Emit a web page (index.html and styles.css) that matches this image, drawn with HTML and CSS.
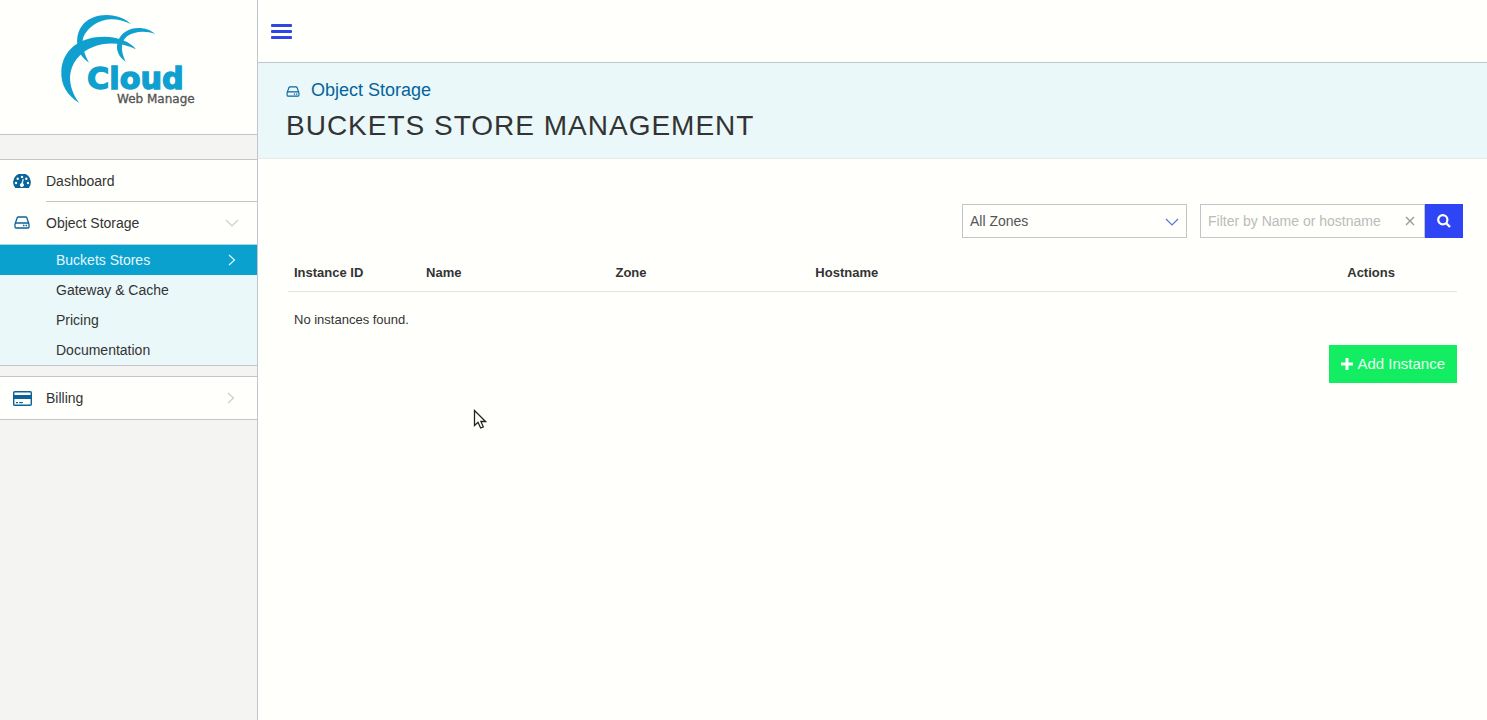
FILE: index.html
```html
<!DOCTYPE html>
<html lang="en">
<head>
<meta charset="utf-8">
<meta name="viewport" content="width=device-width, initial-scale=1">
<title>Buckets Store Management</title>
<link rel="stylesheet" href="styles.css">
</head>
<body>
<svg class="defs" aria-hidden="true">
  <symbol id="drive" viewBox="0 0 16 13">
    <path d="M1.2 7.500 3.200 1.800Q3.500 1 4.400 1H11.600Q12.500 1 12.800 1.800L14.800 7.500M2 7H14Q15 7 15 8V11Q15 12 14 12H2Q1 12 1 11V8Q1 7 2 7Z" fill="none" stroke="currentColor" stroke-width="1.300"/>
    <path d="M9 8.800h1.500v1.500H9zM11.600 8.800h1.500v1.500h-1.500z" fill="currentColor"/>
  </symbol>
  <symbol id="down" viewBox="0 0 14 8"><path d="M1 1 7 7 13 1" fill="none" stroke="currentColor" stroke-width="1.2"/></symbol>
  <symbol id="right" viewBox="0 0 8 12"><path d="M1 1 6.500 6 1 11" fill="none" stroke="currentColor" stroke-width="1.2"/></symbol>
</svg>
<div class="layout">
  <aside class="sidebar">
    <a class="brand" href="#" aria-label="Cloud Web Manage">
      <svg class="logo" viewBox="0 0 480 360">
        <g fill="#0fa0cf">
          <path d="M82 134C77 82 112 45 170 45C200 45 226 56 242 72C205 53 165 53 135 72C112 87 98 107 98 124Z"/>
          <path d="M88 309C50 286 32 253 34 214C37 150 88 110 163 110C207 111 242 126 258 148C218 128 171 125 131 140C88 156 62 191 60 231C60 263 72 288 88 309Z"/>
          <path d="M92 150 102 154Q108 174 117 188Q98 176 88 156Z"/>
          <path d="M227 185C203 169 196 145 204 124C214 96 240 82 272 84C291 86 306 93 316 102C285 90 252 94 232 108C214 122 209 147 227 185Z"/>
        </g>
        <text class="logo-name" x="111" y="266">Cloud</text>
        <text class="logo-tag" x="201" y="309">Web Manage</text>
      </svg>
    </a>
    <nav class="menu">
      <a class="item first" href="#">
        <svg class="item-icon" viewBox="0 0 18 14"><path fill="#0a649b" d="M2.200 14A8.900 8.900 0 1 1 15.800 14Z"/><g fill="#fffffc"><circle cx="3" cy="9" r="1.200"/><circle cx="4.700" cy="4.700" r="1.200"/><circle cx="9" cy="2.900" r="1.200"/><circle cx="13.300" cy="4.700" r="1.200"/><circle cx="15" cy="9" r="1.200"/><path d="M9.800 4.800 10.800 5 9.900 9.200A2 2 0 1 1 8.500 9Z"/></g></svg>
        <span class="label">Dashboard</span>
      </a>
      <a class="item ruled" href="#" aria-expanded="true">
        <svg class="item-icon small"><use href="#drive"/></svg>
        <span class="label">Object Storage</span>
        <svg class="chev-down"><use href="#down"/></svg>
      </a>
      <div class="submenu">
        <a class="sub active" href="#">Buckets Stores<svg class="chev-right"><use href="#right"/></svg></a>
        <a class="sub" href="#">Gateway &amp; Cache</a>
        <a class="sub" href="#">Pricing</a>
        <a class="sub" href="#">Documentation</a>
      </div>
    </nav>
    <nav class="menu billing">
      <a class="item" href="#">
        <svg class="item-icon card" viewBox="0 0 19 15"><rect x=".7" y=".7" width="17.600" height="13.600" rx="1" fill="none" stroke="#0a649b" stroke-width="1.400"/><path fill="#0a649b" d="M1 4h17v4H1zM3 11h2v1.200H3zM6.200 11h3.600v1.200H6.200z"/></svg>
        <span class="label">Billing</span>
        <svg class="chev-right"><use href="#right"/></svg>
      </a>
    </nav>
  </aside>
  <main class="main">
    <header class="topbar">
      <button class="burger" type="button" aria-label="Toggle menu"><span></span><span></span><span></span></button>
    </header>
    <section class="heading">
      <p class="crumb"><svg class="crumb-icon"><use href="#drive"/></svg>Object Storage</p>
      <h1>BUCKETS STORE MANAGEMENT</h1>
    </section>
    <section class="content">
      <form class="filters">
        <div class="zone">
          <select aria-label="Zone"><option>All Zones</option></select>
          <svg class="zone-arrow"><use href="#down"/></svg>
        </div>
        <div class="search">
          <div class="field">
            <input type="text" aria-label="Filter" placeholder="Filter by Name or hostname">
            <button class="clear" type="button" aria-label="Clear"><svg viewBox="0 0 10 10"><path d="M1 1 9 9M9 1 1 9" stroke="#999" stroke-width="1.400"/></svg></button>
          </div>
          <button class="go" type="submit" aria-label="Search"><svg viewBox="0 0 14 14"><circle cx="5.800" cy="5.800" r="4.600" fill="none" stroke="#fff" stroke-width="2.200"/><path d="M9 9 13 13" stroke="#fff" stroke-width="2.400"/></svg></button>
        </div>
      </form>
      <div class="list">
        <table>
          <colgroup><col class="c-id"><col class="c-name"><col class="c-zone"><col class="c-host"><col></colgroup>
          <thead><tr><th>Instance ID</th><th>Name</th><th>Zone</th><th>Hostname</th><th>Actions</th></tr></thead>
          <tbody><tr><td colspan="5">No instances found.</td></tr></tbody>
        </table>
        <button class="add" type="button"><svg viewBox="0 0 12 12"><path d="M4.500 0h3v4.500H12v3H7.500V12h-3V7.500H0v-3h4.500z" fill="#fff"/></svg>Add Instance</button>
      </div>
    </section>
  </main>
</div>
<svg class="pointer" viewBox="0 0 14 21" aria-hidden="true"><path d="M1.500 1.500V16.500L5 13.300 7.600 19 10.300 17.800 7.900 12.500H12.500Z" fill="#fff" stroke="#222" stroke-width="1.300"/></svg>
</body>
</html>
```
FILE: styles.css
```css
* { box-sizing: border-box; }
body {
  margin: 0;
  background: #fffffc;
  color: #333;
  font: 14px/20px "Liberation Sans", Arial, sans-serif;
}
a { color: inherit; text-decoration: none; }
button { border: 0; padding: 0; font: inherit; cursor: pointer; }
svg { display: block; flex: none; }
.defs { position: absolute; width: 0; height: 0; }
.layout { display: flex; min-height: 100vh; }

.sidebar { flex: none; width: 258px; background: #f4f5f3; border-right: 1px solid #c4c4cc; }
.brand { display: block; height: 135px; padding-left: 50px; background: #fffffc; border-bottom: 1px solid #c4c4cc; }
.logo { width: 160px; height: 120px; }
.logo-name { font: bold 91px "DejaVu Sans", sans-serif; fill: #0fa0cf; stroke: #0fa0cf; stroke-width: 4px; }
.logo-tag { font: 36px "DejaVu Sans", sans-serif; fill: #555; stroke: #555; stroke-width: 1px; }
.menu { margin-top: 24px; background: #fffffc; border: solid #c4c4cc; border-width: 1px 0; }
.billing { margin-top: 10px; }
.item { display: flex; align-items: center; height: 42px; padding: 0 18px 0 13px; }
.item.first { height: 41px; padding-top: 1px; }
.item.ruled { height: 43px; background: linear-gradient(#c4c4cc, #c4c4cc) 46px 0 / 100% 1px no-repeat; }
.item-icon { width: 18px; height: 14px; margin-right: 15px; color: #0a649b; }
.item-icon.small { width: 16px; height: 13px; margin: 0 16px 0 1px; }
.item-icon.card { width: 19px; height: 15px; margin-right: 14px; }
.label { flex: 1; }
.chev-down { width: 14px; height: 8px; color: #ccc; }
.chev-right { width: 8px; height: 12px; color: #ccc; margin-right: 4px; }
.submenu { background: #eaf8fa; border-top: 1px solid #a9d9e6; }
.sub { display: flex; align-items: center; justify-content: space-between; height: 30px; padding: 0 17px 0 56px; }
.sub.active { background: #0ba1cf; color: #e4f7fc; }
.sub .chev-right { color: #e4f7fc; }

.main { flex: 1; min-width: 0; }
.topbar { display: flex; align-items: center; height: 63px; padding: 1px 13px 0; border-bottom: 1px solid #c4c4cc; }
.burger { display: grid; gap: 3px; width: 21px; background: none; }
.burger span { height: 3px; border-radius: 1px; background: #2e45e8; }
.heading { padding: 16px 28px; background: #eaf8fa; border-bottom: 1px solid #e6ebea; }
.crumb { display: flex; align-items: center; gap: 11px; margin: 0; color: #05649b; font-size: 18px; line-height: 22px; }
.crumb-icon { width: 14px; height: 11px; margin-top: 2px; }
h1 { margin: 9px 0 0; font-size: 28px; line-height: 32px; font-weight: 400; letter-spacing: 1px; }
.content { padding: 45px 24px 24px 30px; }
.filters { display: flex; justify-content: flex-end; gap: 13px; }
.zone, .field { position: relative; width: 225px; }
.zone select, .field input {
  display: block; width: 100%; height: 34px; padding: 0 7px;
  border: 1px solid #c4c4cc; border-radius: 0; background: #fffffc;
  color: #555; font: inherit; appearance: none;
}
.field input { padding-right: 32px; }
.field input::placeholder { color: #bbb; }
.zone-arrow { position: absolute; right: 8px; top: 14px; width: 14px; height: 8px; color: #5a74dc; pointer-events: none; }
.clear { position: absolute; right: 10px; top: 12px; background: none; }
.clear svg { width: 10px; height: 10px; }
.search { display: flex; }
.go { display: grid; place-items: center; width: 38px; background: #2e45f5; }
.go svg { width: 14px; height: 14px; }
.list { margin: 15px 6px 0 0; }
table { width: 100%; border-collapse: collapse; table-layout: fixed; font-size: 13px; }
th, td { padding: 0 6px; text-align: left; }
th { height: 38px; padding-top: 2px; border-bottom: 1px solid #e2e2e2; }
td { height: 54px; padding-top: 4px; }
.c-id { width: 11.3%; }
.c-name { width: 16.2%; }
.c-zone { width: 17.1%; }
.c-host { width: 45.5%; }
.add { display: flex; align-items: center; gap: 4px; height: 38px; margin-left: auto; padding: 0 12px; background: #12ed61; color: #e6fff0; font-size: 15px; }
.add svg { width: 12px; height: 12px; }
.pointer { position: absolute; left: 473px; top: 409px; width: 14px; height: 21px; pointer-events: none; }
```
